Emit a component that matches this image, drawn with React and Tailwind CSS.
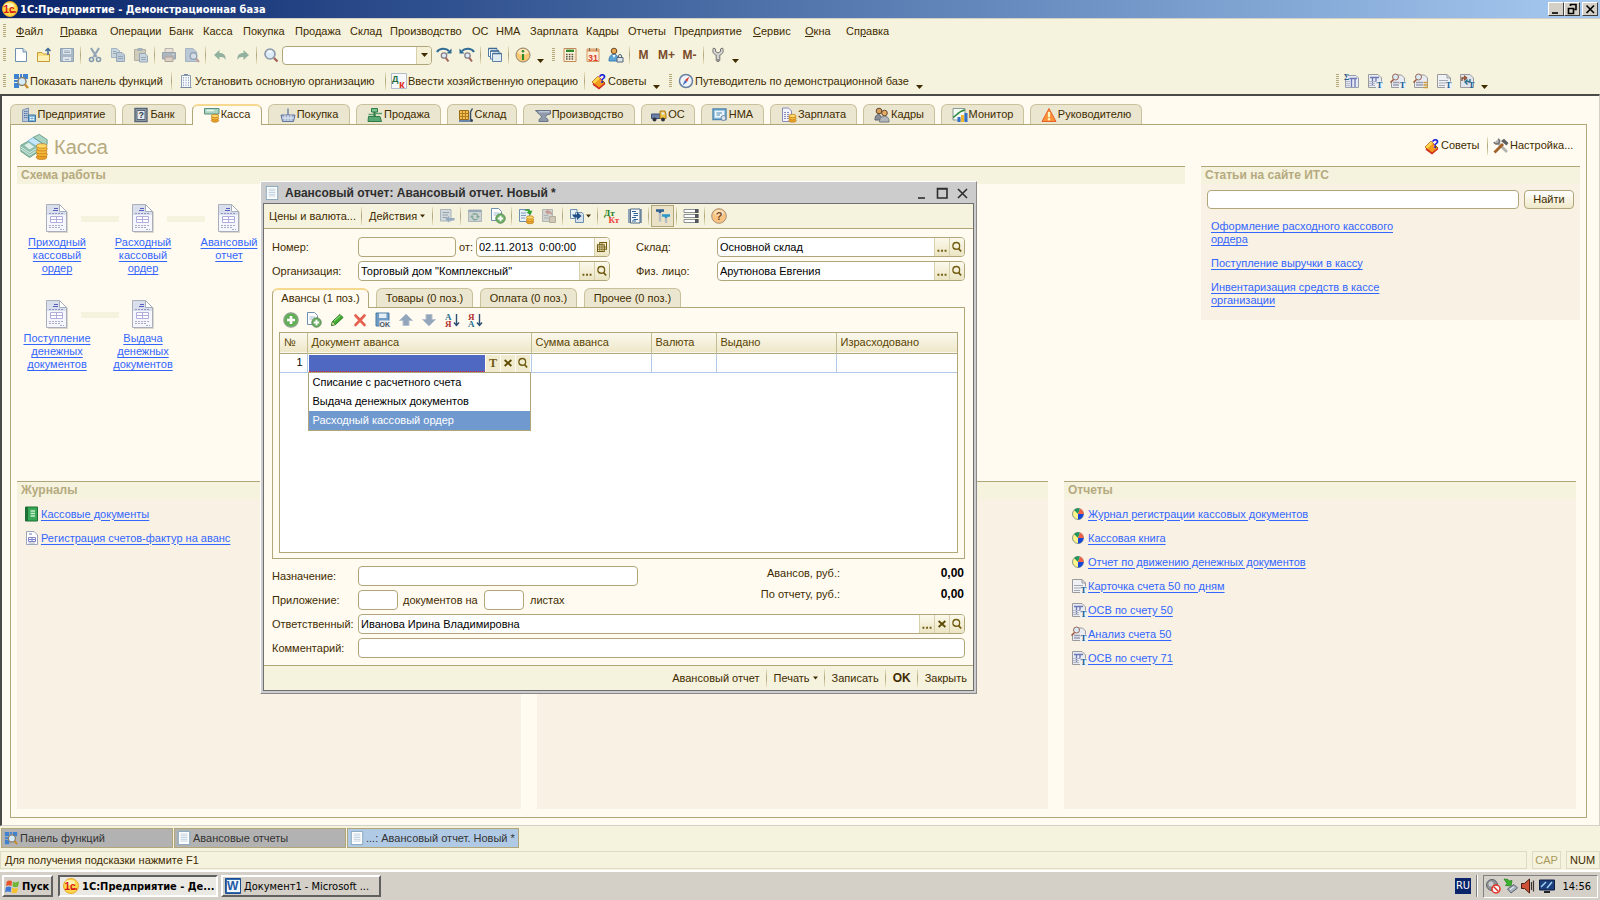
import React from "react";

// Letter inside an icon
const Glyph = ({ x, y, size, color, serif, children }) => (
    <text
        x={x}
        y={y}
        fontSize={size}
        fontWeight="bold"
        fill={color}
        fontFamily={serif ? "Liberation Serif, serif" : "Liberation Sans, sans-serif"}
    >
        {children}
    </text>
);

const Coins = ({ x, top }) => (
    <>
        <ellipse cx={x} cy={top + 4.5} rx="3.7" ry="1.7" fill="#f0a92c" stroke="#b97413" strokeWidth="0.7" />
        <ellipse cx={x} cy={top + 2.3} rx="3.7" ry="1.7" fill="#f7bd3e" stroke="#b97413" strokeWidth="0.7" />
        <ellipse cx={x} cy={top} rx="3.7" ry="1.7" fill="#ffd968" stroke="#b97413" strokeWidth="0.7" />
    </>
);

// 16x16 drawings used by the toolbars, tabs and lists
const ICONS = {
    logo: (
        <>
            <circle cx="8" cy="8" r="7.5" fill="#ffd84a" stroke="#e8a92a" />
            <ellipse cx="7" cy="4.5" rx="5" ry="2.6" fill="#fff3b0" />
            <Glyph x="1.5" y="11.5" size="10" color="#d8161b">1c</Glyph>
            <path d="M8 11 H14" stroke="#d8161b" strokeWidth="1.4" />
        </>
    ),
    page: (
        <>
            <path d="M2.5 1.5 H10 L13.5 5 V14.5 H2.5 Z" fill="#fff" stroke="#6f8fae" />
            <path d="M10 1.5 V5 H13.5" fill="#d5e2f0" stroke="#6f8fae" />
        </>
    ),
    open: (
        <>
            <path d="M1.5 5.5 H6 L7.5 7 H13.5 V14.5 H1.5 Z" fill="#ffe083" stroke="#c79a3a" />
            <path d="M2 9 H13 V14 H2 Z" fill="#fff0b5" />
            <path d="M12 8 V2 M9.5 4 L12 1.5 L14.5 4" fill="none" stroke="#3e6a94" strokeWidth="1.5" />
        </>
    ),
    save: (
        <>
            <path d="M1.5 1.5 H14.5 V14.5 H1.5 Z" fill="#a9b9c8" stroke="#8fa2b4" />
            <path d="M4 2 H12 V7 H4 Z M4 10 H12 V14 H4 Z" fill="#dfe5ea" />
            <path d="M5 4 H11 M5 5.5 H11 M6 12.5 H10" stroke="#9db0c2" />
        </>
    ),
    cut: (
        <>
            <path d="M4 1 L9.5 10 M12 1 L6.5 10" stroke="#93a5b6" strokeWidth="2.2" fill="none" />
            <circle cx="4.5" cy="12.5" r="2" fill="none" stroke="#8298ad" strokeWidth="1.6" />
            <circle cx="11.5" cy="12.5" r="2" fill="none" stroke="#8298ad" strokeWidth="1.6" />
        </>
    ),
    copy: (
        <>
            <path d="M1.5 1.5 H7 L9.5 4 V10.5 H1.5 Z" fill="#c9d4dd" stroke="#a3b4c4" />
            <path d="M6.5 5.5 H12 L14.5 8 V14.5 H6.5 Z" fill="#bccad7" stroke="#94a7b9" />
            <path d="M8 9.5 H13 M8 11.5 H13 M3 4.5 H6 M3 6.5 H6" stroke="#94a7b9" />
        </>
    ),
    paste: (
        <>
            <path d="M1.5 2.5 H12.5 V13.5 H1.5 Z" fill="#cfccbb" stroke="#b0afa0" />
            <path d="M4.5 1 H9.5 V4 H4.5 Z" fill="#a5b1bb" />
            <path d="M6.5 6.5 H12 L14.5 9 V15 H6.5 Z" fill="#c9d4dd" stroke="#94a7b9" />
            <path d="M8 10.5 H13 M8 12.5 H13" stroke="#94a7b9" />
        </>
    ),
    print: (
        <>
            <path d="M4 1.5 H12 V6 H4 Z" fill="#e8e0d6" stroke="#b8b4ae" />
            <path d="M1.5 5.5 H14.5 V12 H1.5 Z" fill="#adb5bd" stroke="#98a3ae" />
            <path d="M4 10 H12 V14.5 H4 Z" fill="#dccfc5" stroke="#aea39b" />
            <path d="M11.5 7.5 H13" stroke="#dfe8d0" />
        </>
    ),
    preview: (
        <>
            <path d="M1.5 1.5 H9 L12.5 5 V14.5 H1.5 Z" fill="#bac8d5" stroke="#a5b4c2" />
            <circle cx="9.5" cy="9" r="3.3" fill="#d5dee6" stroke="#93a5b6" strokeWidth="1.4" />
            <path d="M12 11.5 L15 15" stroke="#bb9f9a" strokeWidth="2" />
        </>
    ),
    undo: <path d="M2 8 L7.5 3 V6 C12 6 14 8.5 13.5 13 C12 10 10.5 9.8 7.5 10 V13 Z" fill="#93b19f" />,
    redo: <path d="M14 8 L8.5 3 V6 C4 6 2 8.5 2.5 13 C4 10 5.5 9.8 8.5 10 V13 Z" fill="#93b19f" />,
    find: (
        <>
            <circle cx="7" cy="7" r="5" fill="#dcebf8" stroke="#8b98a8" strokeWidth="1.6" />
            <path d="M5 5.5 Q6.5 4 8.5 5" stroke="#fff" strokeWidth="1.4" fill="none" />
            <path d="M11 11 L14.5 14.5" stroke="#a2655a" strokeWidth="2.4" />
        </>
    ),
    findNext: (
        <>
            <path d="M1 5 C3 1 10 0.5 13 4" stroke="#2f6b94" strokeWidth="2" fill="none" />
            <path d="M15.5 1.5 V6.5 H10.5 Z" fill="#2f6b94" />
            <circle cx="8" cy="8.5" r="2.7" fill="#dcebf8" stroke="#8b8088" strokeWidth="1.3" />
            <path d="M9.8 10.8 L12.5 14.5" stroke="#a2655a" strokeWidth="2" />
        </>
    ),
    findPrev: (
        <>
            <path d="M15 5 C13 1 6 0.5 3 4" stroke="#2f6b94" strokeWidth="2" fill="none" />
            <path d="M0.5 1.5 V6.5 H5.5 Z" fill="#2f6b94" />
            <circle cx="8.5" cy="8.5" r="2.7" fill="#dcebf8" stroke="#8b8088" strokeWidth="1.3" />
            <path d="M10.3 10.8 L13 14.5" stroke="#a2655a" strokeWidth="2" />
        </>
    ),
    windows: (
        <>
            <path d="M1.5 1.5 H10 V9.5 H1.5 Z" fill="#fff" stroke="#4f7ba3" />
            <path d="M3.5 4 H12 V12 H3.5 Z" fill="#fff" stroke="#4f7ba3" />
            <path d="M5.5 6.5 H14.5 V14.5 H5.5 Z" fill="#e1ebf4" stroke="#5f82a4" />
            <path d="M1.5 1.5 H10 M3.5 4 H12 M5.5 6.5 H14.5" stroke="#3e6a94" strokeWidth="1.6" />
        </>
    ),
    info: (
        <>
            <circle cx="8" cy="8" r="7" fill="#fbc872" stroke="#8a8378" />
            <ellipse cx="8" cy="5" rx="5" ry="3" fill="#fde7bd" />
            <path d="M8 7 V13" stroke="#2f8a2b" strokeWidth="2.2" />
            <circle cx="8" cy="4.2" r="1.3" fill="#2f8a2b" />
        </>
    ),
    calc: (
        <>
            <path d="M2 1.5 H14 V14.5 H2 Z" fill="#fdf4dc" stroke="#c58a5a" />
            <path d="M4 3.8 H12" stroke="#2f8a2b" strokeWidth="2.4" />
            <path d="M4 7.5 H12.5 M4 9.8 H12.5 M4 12 H12.5" stroke="#5b5042" strokeWidth="1.5" strokeDasharray="1.6 1.2" />
        </>
    ),
    calendar: (
        <>
            <path d="M2 2 H14 V14.5 H2 Z" fill="#fdf0dc" stroke="#d29b62" />
            <path d="M2 3.5 H14" stroke="#e0a56f" strokeWidth="2.5" />
            <path d="M4.5 1 V4 M11.5 1 V4" stroke="#7b6a58" />
            <Glyph x="3" y="13.5" size="9" color="#e0402a">31</Glyph>
        </>
    ),
    user: (
        <>
            <circle cx="6" cy="4" r="2.8" fill="#e8a94f" stroke="#6b4a2c" />
            <path d="M1 14 C1 8 4 7.5 6 7.5 C9 7.5 10 9 10 14 Z" fill="#5ba3d6" stroke="#3d7fb0" />
            <path d="M4.5 8 L6 11 L7.5 8 Z" fill="#fff" />
            <path d="M9 10.5 H15 V15 H9 Z" fill="#dfe4e9" stroke="#54687c" />
            <path d="M10.5 10.5 V9 A1.5 1.5 0 0 1 13.5 9 V10.5" fill="none" stroke="#54687c" />
        </>
    ),
    wrench: (
        <>
            <path d="M3.5 1 C1.5 5 4 7.5 6.2 8 V13.5 Q8 16 9.8 13.5 V8 C12 7.5 14.5 5 12.5 1 L10.5 2 V4.5 L8 6 L5.5 4.5 V2 Z" fill="#d4d4d2" stroke="#75736f" />
            <circle cx="8" cy="13" r="0.9" fill="#75736f" />
        </>
    ),
    panel: (
        <>
            <path d="M1 1 H6 V6 H1 Z M10 1 H15 V6 H10 Z M1 10 H6 V15 H1 Z M1 7 H5 V9 H1 Z M7 1 H9 V4 H7 Z" fill="#3f82cf" />
            <circle cx="9" cy="8.5" r="4" fill="#d4ecfa" stroke="#8b7f6c" strokeWidth="1.5" />
            <path d="M12 11.5 L15 15" stroke="#c98a2c" strokeWidth="2.4" />
        </>
    ),
    org: (
        <>
            <path d="M3.5 2.5 H12.5 V14.5 H3.5 Z" fill="#f6f9fc" stroke="#8c9cb2" />
            <path d="M2.5 14.5 H13.5 M6 1.5 H10" stroke="#7788a0" />
            <path d="M5.5 4 V13 M8 4 V13 M10.5 4 V13" stroke="#9fadc4" strokeDasharray="1.5 1" />
        </>
    ),
    dk: (
        <>
            <path d="M0.5 0.5 H15.5 V15.5 H0.5 Z" fill="#f6f8fa" stroke="#b3bcc8" />
            <Glyph x="1" y="9" size="9" color="#1f6d3c">Д</Glyph>
            <Glyph x="8" y="14.5" size="11" color="#df2f22">к</Glyph>
        </>
    ),
    tips: (
        <>
            <path d="M1 9 L7 3.5 L14 10 L8 15.5 Z" fill="#f29a1b" stroke="#9a3e10" />
            <path d="M1 9 L7 3.5 L9 5.5 L3.5 10.5 Z" fill="#ffd54a" />
            <path d="M2 11 L8 15.5 L14 10.5" stroke="#d5311c" strokeWidth="1.6" fill="none" />
            <Glyph x="7.5" y="10" size="12" color="#1418d8">?</Glyph>
        </>
    ),
    compass: (
        <>
            <circle cx="8" cy="8" r="6.5" fill="#eef4fa" stroke="#6880a0" strokeWidth="1.5" />
            <path d="M11.5 3.5 L9 9 L7 7 Z" fill="#dd3a2c" />
            <path d="M4.5 12.5 L7 7 L9 9 Z" fill="#3a6fc4" />
        </>
    ),
    building: (
        <>
            <path d="M1.5 3 L7.5 1 V14.5 H1.5 Z" fill="#b8c6da" stroke="#7f93b3" />
            <path d="M3 4.5 H6.5 M3 6.5 H6.5 M3 8.5 H6.5 M3 10.5 H6.5" stroke="#54719c" strokeDasharray="1.5 0.7" />
            <path d="M7.5 8 H14.5 V14.5 H7.5 Z" fill="#7fb7dc" stroke="#3c74a4" />
            <path d="M9 10.5 H13.5 M9 12.5 H13.5" stroke="#fff" strokeDasharray="1.5 1" />
        </>
    ),
    safe: (
        <>
            <path d="M2 1.5 H14 V14.5 H2 Z" fill="#9aa7b5" stroke="#566475" strokeWidth="1.4" />
            <path d="M4 3.5 H12 V12.5 H4 Z" fill="#e7ebef" stroke="#566475" />
            <Glyph x="5.5" y="11.2" size="9" color="#2f3d4d">?</Glyph>
        </>
    ),
    cash: (
        <>
            <path d="M0.5 1.5 H15 V7 H0.5 Z" fill="#a9d5c4" stroke="#5a8d7c" />
            <path d="M2.5 3.5 H10" stroke="#e4f5ee" strokeWidth="1.5" />
            <Coins x={11} top={9} />
        </>
    ),
    basket: (
        <>
            <path d="M1 8 H15 L13.5 14.5 H2.5 Z" fill="#a3b3cd" stroke="#6078a0" />
            <path d="M5 8 V14 M8 8 V14 M11 8 V14 M2 11 H14" stroke="#e6ecf5" />
            <path d="M8 8 V1.5" stroke="#6078a0" strokeWidth="1.3" />
        </>
    ),
    register: (
        <>
            <path d="M4.5 1.5 H10.5 V5 H4.5 Z" fill="#7cc491" stroke="#2e7c46" />
            <path d="M7.5 5 V9" stroke="#2e7c46" strokeWidth="2.4" />
            <path d="M1.5 7.5 H6 M9 6.5 H15" stroke="#5a9f70" strokeWidth="1.6" />
            <path d="M1.5 9.5 H13 L14.5 14.5 H1 Z" fill="#58a873" stroke="#2e7c46" />
        </>
    ),
    warehouse: (
        <>
            <path d="M1.5 3.5 H10.5 V12.5 H1.5 Z" fill="#f5c04e" stroke="#9a6a18" />
            <path d="M4.5 3.5 V12.5 M7.5 3.5 V12.5 M1.5 6.5 H10.5 M1.5 9.5 H10.5" stroke="#b07d22" />
            <path d="M12.5 13 V5 L14.5 1.5" stroke="#3d4f66" strokeWidth="1.5" fill="none" />
            <path d="M1 14 H12" stroke="#4a6da0" strokeWidth="1.6" />
            <circle cx="13.5" cy="13.5" r="1.5" fill="#33415a" />
        </>
    ),
    anvil: (
        <>
            <path d="M0.5 3.5 H15.5 V7 C12 7.5 10.5 8.5 10.5 10.5 L13 12.5 V14.5 H4 V12.5 L6.5 10.5 C6.5 8 3.5 7.5 0.5 3.5 Z" fill="#8f9aab" stroke="#67748a" />
            <path d="M4 4.8 H14.5" stroke="#d3dae4" />
        </>
    ),
    truck: (
        <>
            <path d="M0.5 7 H9 V11.5 H0.5 Z" fill="#6a7fa5" stroke="#40527a" />
            <path d="M9 4 H14 L15 8 V11.5 H9 Z" fill="#f2c443" stroke="#a87a1c" />
            <path d="M10.5 5.5 H13 L13.7 7.5 H10.5 Z" fill="#dcecf7" />
            <circle cx="3.5" cy="12.5" r="2" fill="#30343c" />
            <circle cx="12" cy="12.5" r="2" fill="#30343c" />
        </>
    ),
    patent: (
        <>
            <path d="M1 2 H14 V12.5 H1 Z" fill="#9cc8e6" stroke="#4f86ae" strokeWidth="1.4" />
            <path d="M3 4 H12 V10.5 H3 Z" fill="#edf6fc" />
            <path d="M4.5 6 H10 M4.5 8 H8" stroke="#4f86ae" />
            <circle cx="11.5" cy="11" r="2.5" fill="#d9e3ee" stroke="#6d86a4" />
        </>
    ),
    payroll: (
        <>
            <path d="M1.5 1 H7.5 L10.5 4 V14.5 H1.5 Z" fill="#f3f3fb" stroke="#8c8cb8" />
            <path d="M3 5.5 H9 M3 7.5 H9 M3 9.5 H9 M3 11.5 H9" stroke="#8c8cb8" strokeDasharray="2 1" />
            <Coins x={11.5} top={9} />
        </>
    ),
    staff: (
        <>
            <circle cx="5" cy="4" r="2.8" fill="#d9a05a" stroke="#5d4630" />
            <path d="M1 13 C1 8 3 7.5 5.5 7.5 L9 13 Z" fill="#8b8f97" stroke="#5f636b" />
            <circle cx="10.5" cy="6" r="2.8" fill="#e8ac61" stroke="#5d4630" />
            <path d="M5.5 15 C5.5 10 8 9.5 10.5 9.5 C14 9.5 15 11 15 15 Z" fill="#b3b7bd" stroke="#74787f" />
        </>
    ),
    monitor: (
        <>
            <path d="M1 1.5 H13 V13 H1 Z" fill="#f4faf4" stroke="#8b9a94" />
            <path d="M1 10.5 C4 9.5 6 4 13 3" stroke="#2f8a3b" strokeWidth="1.6" fill="none" />
            <path d="M5.5 10 H8.5 V15 H5.5 Z M12.5 6 H15.5 V15 H12.5 Z" fill="#3470c9" />
            <path d="M9 8 H12 V15 H9 Z" fill="#f4b62d" />
        </>
    ),
    warning: (
        <>
            <path d="M8 1.5 L15 14.5 H1 Z" fill="#fb9238" stroke="#e8602a" strokeLinejoin="round" />
            <path d="M8 5 V10.3" stroke="#fff6c0" strokeWidth="2.2" />
            <circle cx="8" cy="12.3" r="1.2" fill="#fff6c0" />
        </>
    ),
    money: (
        <>
            <path d="M0.5 7 L5 4.5 L10 8 V11 L5.5 14 L0.5 10.5 Z" fill="#8fbfac" stroke="#5f9a84" strokeWidth="0.5" />
            <path d="M0.5 8 L5.5 11.3 L10 8.5 M0.5 9.2 L5.5 12.6 L10 9.8" stroke="#e4f3ec" strokeWidth="0.5" fill="none" />
            <path d="M4.5 4.5 L7.5 2.5 L13 6 V8.5 L10 10.5 V8 Z" fill="#c4e7fb" stroke="#7ab3d6" strokeWidth="0.5" />
            <path d="M7.5 2.5 L11 0.8 L15.5 3.8 V6.5 L13 8 V6 Z" fill="#a9d2c2" stroke="#5f9a84" strokeWidth="0.5" />
            <path d="M2.5 7 L5 5.6 L8 7.8 L5.5 9.4 Z" fill="#dff2ea" />
            <ellipse cx="12.3" cy="13.8" rx="3" ry="1.3" fill="#eea127" stroke="#b97413" strokeWidth="0.4" />
            <ellipse cx="12.6" cy="12.2" rx="3" ry="1.3" fill="#f5b434" stroke="#b97413" strokeWidth="0.4" />
            <ellipse cx="12.3" cy="10.6" rx="3" ry="1.3" fill="#f7bd3e" stroke="#b97413" strokeWidth="0.4" />
            <ellipse cx="12.6" cy="9" rx="3" ry="1.3" fill="#f7bd3e" stroke="#b97413" strokeWidth="0.4" />
            <ellipse cx="12.4" cy="7.4" rx="3" ry="1.3" fill="#ffd968" stroke="#b97413" strokeWidth="0.4" />
        </>
    ),
    tools: (
        <>
            <path d="M3 3 L14 14" stroke="#b2b2ae" strokeWidth="2.8" />
            <path d="M1 4 A3 3 0 0 0 6 5 A3 3 0 0 0 5 1" fill="none" stroke="#777" strokeWidth="1.8" />
            <path d="M1.5 14.5 L10 6" stroke="#a1622a" strokeWidth="2.8" />
            <path d="M8 3 L11 0.8 L15.5 5 L13.5 7.5 L11 5.5 Z" fill="#5d5f63" />
        </>
    ),
    doc: (
        <>
            <path d="M1.5 0.5 H14.5 V15.5 H1.5 Z" fill="#fff" stroke="#7aa0b8" />
            <path d="M4 3.5 H12 M4 5.5 H12 M4 7.5 H12 M4 9.5 H12 M4 11.5 H12" stroke="#b7cbdc" />
        </>
    ),
    write: (
        <>
            <path d="M1.5 1.5 H12 V13 H1.5 Z" fill="#d3d8db" stroke="#a8b3bc" />
            <path d="M3.5 4.5 H10 M3.5 7 H9 M3.5 9.5 H8" stroke="#97a5b1" />
            <path d="M6.5 11 L10 8 V10 H15.5 V12.5 H10 V14.5 Z" fill="#94a9bd" />
        </>
    ),
    refresh: (
        <>
            <path d="M1.5 2 H14.5 V13.5 H1.5 Z" fill="#ccd2d1" stroke="#adb6ba" />
            <path d="M1.5 3 H14.5" stroke="#97a7b3" strokeWidth="2" />
            <path d="M5.5 6.5 C8 5 10.5 6 10.8 8 M10.5 11 C8 12.5 5.5 11.5 5.2 9.5" fill="none" stroke="#7da894" strokeWidth="1.3" />
            <path d="M9 8 H13 L11 10.5 Z M3 9.5 H7 L5 7 Z" fill="#7da894" />
        </>
    ),
    pageAdd: (
        <>
            <path d="M1.5 0.5 H8.5 L11.5 3.5 V12.5 H1.5 Z" fill="#fff" stroke="#6f8fae" />
            <path d="M3.5 5 H9 M3.5 7 H8" stroke="#a9bed2" />
            <circle cx="10.5" cy="10.5" r="4.7" fill="#6bb161" stroke="#5c8a58" />
            <path d="M10.5 7.8 V13.2 M7.8 10.5 H13.2" stroke="#fff" strokeWidth="1.8" />
        </>
    ),
    post: (
        <>
            <path d="M1.5 1.5 H11.5 V13.5 H1.5 Z" fill="#e8f0f7" stroke="#6f8fae" />
            <path d="M3 5 H8 M3 7.5 H8 M3 10 H7" stroke="#7f9cba" />
            <path d="M6 3 C8 0.5 11 0.5 12.5 3 L14.5 2.5 L12.5 7 L8.5 4.5 L10.5 3.8 C9.5 2.5 7.5 2.5 6 3 Z" fill="#34a02c" />
            <Coins x={12} top={9.5} />
        </>
    ),
    unpost: (
        <>
            <path d="M1.5 1.5 H11.5 V13.5 H1.5 Z" fill="#d2d4d0" stroke="#b2b6b3" />
            <path d="M3 10 H8 M3 7.5 H7" stroke="#aab0b3" />
            <path d="M4 4 L7.5 1 V3 C10 3 11.5 4.5 11 7.5 C10 5.5 9 5.2 7.5 5.2 V7 Z" fill="#c59a93" />
            <path d="M8.5 8.5 H14.5 V14.5 H8.5 Z" fill="#cfc7b6" stroke="#b3ac9c" />
        </>
    ),
    goto: (
        <>
            <path d="M1.5 1.5 H8 V10.5 H1.5 Z" fill="#e8f0f7" stroke="#6f8fae" />
            <path d="M6.5 4.5 H13 L14.5 6.5 V14.5 H6.5 Z" fill="#d4e2ee" stroke="#6f8fae" />
            <path d="M3 6.5 H8 V4 L12.5 8 L8 12 V9.5 H5 Z" fill="#1f4f86" />
        </>
    ),
    dtkt: (
        <>
            <Glyph x="0" y="7.5" size="9" color="#1e8022" serif>Дт</Glyph>
            <Glyph x="4.5" y="15" size="9" color="#ef3b3b" serif>Кт</Glyph>
        </>
    ),
    journal: (
        <>
            <path d="M1 1 H15 V15 H1 Z" fill="#8fa1b4" />
            <path d="M3.5 1 H13 V15 H3.5 Z" fill="#f4f8fb" stroke="#4d6882" />
            <path d="M5 3.5 H9 M6.5 5.5 H11 M6.5 7.5 H11 M5 9.5 H9 M6.5 11.5 H11 M5 13 H9" stroke="#2f6496" />
        </>
    ),
    filter: (
        <>
            <path d="M5 3.5 V13.5 M11 8 V15" stroke="#b9bdc0" strokeWidth="2.4" />
            <path d="M1 2.5 H9 M5 2.5 V5" stroke="#2f5e92" strokeWidth="2.4" />
            <path d="M7 7.5 H15 M11 7.5 V10" stroke="#2b97c9" strokeWidth="2.4" />
        </>
    ),
    rows: (
        <>
            <path d="M1 1.5 H15 V4.5 H1 Z M1 6.5 H15 V9.5 H1 Z M1 11.5 H15 V14.5 H1 Z" fill="#fff" stroke="#8c9195" />
            <path d="M12 1 H15.5 V5 H12 Z M12 6 H15.5 V10 H12 Z M12 11 H15.5 V15 H12 Z" fill="#54585d" />
        </>
    ),
    help: (
        <>
            <circle cx="8" cy="8" r="7.3" fill="#f9c384" stroke="#a99074" />
            <ellipse cx="8" cy="5" rx="5" ry="3" fill="#fde0b8" />
            <Glyph x="4.8" y="12" size="11" color="#7a4a24">?</Glyph>
        </>
    ),
    add: (
        <>
            <circle cx="8" cy="8" r="7.2" fill="#62ad57" stroke="#8fa58b" strokeWidth="1.2" />
            <path d="M8 4 V12 M4 8 H12" stroke="#fff" strokeWidth="2.6" />
        </>
    ),
    pencil: (
        <>
            <path d="M2.5 13.5 L3.5 9.5 L11 2.5 L14 5.5 L6.5 12.5 Z" fill="#3fae2f" stroke="#227318" />
            <path d="M2.5 13.5 L3.5 9.5 L6.5 12.5 Z" fill="#f0e3c0" stroke="#227318" strokeWidth="0.6" />
            <path d="M5 9 L11.5 3.5" stroke="#a9e59d" />
        </>
    ),
    remove: <path d="M3.5 3.5 L12.5 13 M12.5 3.5 L3.5 13" stroke="#e5604f" strokeWidth="2.6" strokeLinecap="round" />,
    saveOk: (
        <>
            <path d="M1 1 H14 V14 H1 Z" fill="#6e9cc4" stroke="#4d7aa3" />
            <path d="M4 1.5 H11.5 V6 H4 Z" fill="#e5eef5" />
            <path d="M4.5 8.5 H15.5 V15.5 H4.5 Z" fill="#f0f3f5" />
            <Glyph x="4.5" y="14.5" size="7" color="#4a5560">OK</Glyph>
        </>
    ),
    up: <path d="M8 2 L14.5 8.5 H11 V13.5 H5 V8.5 H1.5 Z" fill="#93a5ba" stroke="#b5c1ce" />,
    down: <path d="M8 14 L14.5 7.5 H11 V2.5 H5 V7.5 H1.5 Z" fill="#93a5ba" stroke="#b5c1ce" />,
    sortAsc: (
        <>
            <Glyph x="1" y="7.5" size="9" color="#2b7090" serif>А</Glyph>
            <Glyph x="1" y="15" size="9" color="#b03030" serif>Я</Glyph>
            <path d="M12.5 2 V13 M10 10.5 L12.5 13.5 L15 10.5" stroke="#2d4f74" strokeWidth="1.4" fill="none" />
        </>
    ),
    sortDesc: (
        <>
            <Glyph x="1" y="7.5" size="9" color="#b03030" serif>Я</Glyph>
            <Glyph x="1" y="15" size="9" color="#2b7090" serif>А</Glyph>
            <path d="M12.5 2 V13 M10 10.5 L12.5 13.5 L15 10.5" stroke="#2d4f74" strokeWidth="1.4" fill="none" />
        </>
    ),
    // sheets used by the standard reports
    sumReport: (
        <>
            <path d="M3.5 2.5 H12 L14.5 5 V14.5 H1.5 V7" fill="#e6e9f2" stroke="#9a9fb0" />
            <path d="M5.5 5.5 H13 M7.5 5.5 V14 M11 5.5 V14" stroke="#6b78b5" strokeWidth="1.3" />
            <path d="M2 8.5 H6 M2 10.5 H6 M2 12.5 H6" stroke="#b5bac8" />
            <Glyph x="0" y="7" size="8" color="#2c5b86" serif>Σ</Glyph>
        </>
    ),
    osv: (
        <>
            <path d="M1.5 1.5 H11 L14.5 5 V14.5 H1.5 Z" fill="#e9ebf2" stroke="#9a9a9c" />
            <path d="M3 4.5 H12 M5.5 4.5 V13 M9 4.5 V9" stroke="#6b78b5" strokeWidth="1.3" />
            <path d="M2 8.5 H8 M2 10.5 H8 M2 12.5 H8" stroke="#b5bac8" />
            <path d="M9 8.5 H16 V16 H9 Z" fill="#eef2f5" />
            <Glyph x="9.5" y="15" size="9" color="#1f5f95" serif>T</Glyph>
        </>
    ),
    analysis: (
        <>
            <path d="M5.5 2 H11.5 L14.5 5 V14.5 H1.5 V9" fill="#e9ebf2" stroke="#9a9a9c" />
            <path d="M3 9.5 H9 M3 12 H9" stroke="#9a9fb0" strokeWidth="1.3" />
            <circle cx="5.5" cy="4" r="3" fill="#dbe9f5" stroke="#9a6656" />
            <path d="M3.5 6.5 L0.5 9.5" stroke="#9a4f32" strokeWidth="1.5" />
            <path d="M9 8.5 H16 V16 H9 Z" fill="#eef2f5" />
            <Glyph x="9.5" y="15" size="9" color="#1f5f95" serif>T</Glyph>
        </>
    ),
    analysisRows: (
        <>
            <path d="M5.5 2 H11.5 L14.5 5 V14.5 H1.5 V9" fill="#e9ebf2" stroke="#9a9a9c" />
            <path d="M3 9.5 H10 M3 12 H10" stroke="#9a9fb0" strokeWidth="1.3" />
            <circle cx="5.5" cy="4" r="3" fill="#dbe9f5" stroke="#9a6656" />
            <path d="M3.5 6.5 L0.5 9.5" stroke="#9a4f32" strokeWidth="1.5" />
            <path d="M10.5 9.5 H15 M10.5 12 H15 M10.5 14.5 H15" stroke="#c99b3b" strokeWidth="1.4" />
        </>
    ),
    card: (
        <>
            <path d="M1.5 1.5 H11 L14.5 5 V14.5 H1.5 Z" fill="#eff1f5" stroke="#9a9a9c" />
            <path d="M11 1.5 V5 H14.5" fill="none" stroke="#9a9a9c" />
            <path d="M3 7.5 H12 M3 10 H9 M3 12.5 H9" stroke="#a4a8b2" />
            <path d="M9 8.5 H16 V16 H9 Z" fill="#eef2f5" />
            <Glyph x="9.5" y="15" size="9" color="#1f5f95" serif>T</Glyph>
        </>
    ),
    turnover: (
        <>
            <path d="M1.5 1.5 H11 L14.5 5 V14.5 H1.5 Z" fill="#e2e5ee" stroke="#9a9a9c" />
            <path d="M3 8 V5 H6 M5 2.8 L7.5 5 L5 7.2" stroke="#8a4a2a" strokeWidth="1.4" fill="none" />
            <path d="M11 6 V8.5 H7 M8.5 6.5 L6 9 L8.5 11.5" stroke="#2b7090" strokeWidth="1.4" fill="none" />
            <Glyph x="9.5" y="15" size="9" color="#1f5f95" serif>T</Glyph>
        </>
    ),
    pie: (
        <>
            <circle cx="7" cy="8" r="5.5" fill="#fdf58a" stroke="#8f9a86" />
            <path d="M7 8 L3 4 A5.5 5.5 0 0 1 9 2.7 Z" fill="#1f9660" />
            <path d="M7 8 L9 2.7 A5.5 5.5 0 0 1 12.500 8 Z" fill="#f2604a" />
            <path d="M7 8 H12.500 A5.5 5.5 0 0 1 7 13.5 Z" fill="#1746d8" />
        </>
    ),
    book: (
        <>
            <path d="M1.5 1 H13.5 V15 H1.5 Z" fill="#38a857" stroke="#1d6e35" />
            <path d="M1.5 1 H4 V15 H1.5 Z" fill="#1d6e35" />
            <path d="M6.5 5 H11 M6.5 7.5 H11 M6.5 10 H11" stroke="#c5edd0" strokeWidth="1.3" />
        </>
    ),
    invoice: (
        <>
            <path d="M2.5 1.5 H10 L13.5 5 V14.5 H2.5 Z" fill="#fff" stroke="#9aa5bb" />
            <path d="M5 4 H8" stroke="#6d78c0" />
            <path d="M4.5 7.5 H11.5 V11.5 H4.5 Z M8 7.5 V11.5 M4.5 9.5 H11.5" stroke="#8084cc" fill="none" />
            <path d="M4.5 13 H11" stroke="#a9adc4" />
        </>
    ),
    flag: (
        <>
            <path d="M2 2.5 Q5 0.8 7.5 2.5 L7 7.5 Q4 6 1 7.5 Z" fill="#e8532c" />
            <path d="M8.5 3 Q11.5 4.5 15 2.5 L14 8 Q11 9.5 8 8 Z" fill="#6fb536" />
            <path d="M1 8.8 Q4 7.2 6.8 8.8 L6 14 Q3 12.5 0 14 Z" fill="#3f78d8" />
            <path d="M7.8 9.2 Q10.5 10.8 13.8 9.2 L12.8 14.5 Q10 16 7 14.5 Z" fill="#f7c22c" />
        </>
    ),
    word: (
        <>
            <path d="M0.5 0.5 H15.5 V15.5 H0.5 Z" fill="#2f6cb5" stroke="#1d4d8c" />
            <path d="M2 2 H15 V14 H2 Z" fill="#f2f7fc" />
            <Glyph x="2" y="12" size="12" color="#1f5ba8">W</Glyph>
        </>
    ),
    muted: (
        <>
            <circle cx="7" cy="7" r="5.5" fill="#8e9396" stroke="#5f6466" />
            <circle cx="6" cy="6" r="2.5" fill="#c9cdcf" />
            <circle cx="11" cy="11" r="4" fill="#fff" stroke="#dd2f22" strokeWidth="1.5" />
            <path d="M8.5 8.5 L13.5 13.5" stroke="#dd2f22" strokeWidth="1.5" />
        </>
    ),
    usb: (
        <>
            <path d="M1 1 L5 1.5 L6.5 3 L9 2.5 L8 8 L2.5 7.5 L4 5.5 Z" fill="#3cb52f" stroke="#1f7a18" strokeWidth="0.7" />
            <path d="M4.5 11 L11 6.5 L14.5 10 L8 15 Z" fill="#a9b2c0" stroke="#59616e" />
            <path d="M7 11.5 L11 8.8" stroke="#f2f4f7" />
        </>
    ),
    speaker: (
        <>
            <path d="M0.5 5.5 H3.5 L8.5 1 V15 L3.5 10.5 H0.5 Z" fill="#cf5136" stroke="#4d1c10" />
            <path d="M10.5 4 V12 M12.5 2.5 V13.5" stroke="#3a3432" strokeWidth="1.2" />
        </>
    ),
    display: (
        <>
            <path d="M0.5 2 H15.5 V12 H0.5 Z" fill="#1d3e7c" stroke="#0e1f40" />
            <path d="M2 9 L7 4 M8 10 L13 4" stroke="#9fd1f5" strokeWidth="1.5" />
            <path d="M5 14 H11" stroke="#20242c" strokeWidth="2" />
        </>
    ),
    lens: (
        <>
            <circle cx="7" cy="6.5" r="4.5" fill="none" stroke="#6f5a10" strokeWidth="1.7" />
            <path d="M10 10 L13.5 14" stroke="#6f5a10" strokeWidth="2.4" />
        </>
    ),
    cross: <path d="M3.5 4 L12.5 12 M12.5 4 L3.5 12" stroke="#5c4a00" strokeWidth="2.4" />,
    letterT: <Glyph x="2.5" y="13.5" size="16" color="#6f5a10" serif>T</Glyph>,
    picker: (
        <>
            <path d="M5 2 H14 V11 H5 Z" fill="#f3ecc4" stroke="#6f5a10" strokeWidth="1.4" />
            <path d="M2 5 H11 V14 H2 Z" fill="#f3ecc4" stroke="#6f5a10" strokeWidth="1.4" />
            <path d="M2 8 H14 M2 11 H11 M5 5 V14 M8 2 V14" stroke="#6f5a10" />
        </>
    ),
    dots: <path d="M2 13 H4.5 M6.8 13 H9.3 M11.5 13 H14" stroke="#6f5a10" strokeWidth="2.4" />,
};

const Icon = ({ name, className = "w-4 h-4" }) => (
    <svg viewBox="0 0 16 16" className={`shrink-0 overflow-visible ${className}`} aria-hidden="true">
        {ICONS[name]}
    </svg>
);

const Grip = ({ className = "" }) => (
    <svg viewBox="0 0 3 14" className={`w-[3px] h-[14px] shrink-0 ${className}`} aria-hidden="true">
        <path d="M1.5 0 V14" stroke="#b5aa7e" strokeWidth="3" strokeDasharray="1 1" />
    </svg>
);

const Sep = ({ className = "mx-[2px]" }) => (
    <span className={`w-px h-[18px] shrink-0 bg-gradient-to-b from-[#e9e4c6] via-[#b0a679] to-[#e9e4c6] ${className}`} />
);

const Arrow = ({ className = "w-[7px]" }) => (
    <svg viewBox="0 0 7 4" className={`h-1 shrink-0 ${className}`} aria-hidden="true">
        <path d="M0 0 H7 L3.5 4 Z" fill="#3f2c00" />
    </svg>
);

// Strip of icon buttons; "|" draws a separator
const IconStrip = ({ items }) =>
    items.map(([name, title], i) =>
        name === "|" ? (
            <Sep key={i} />
        ) : (
            <button key={i} type="button" title={title} className="w-[23px] h-[22px] flex items-center justify-center shrink-0">
                <Icon name={name} />
            </button>
        )
    );

// label, width, index of the underlined letter
const MENU = [
    ["Файл", "w-[44px]", 0],
    ["Правка", "w-[50px]", 0],
    ["Операции", "w-[59px]"],
    ["Банк", "w-[34px]"],
    ["Касса", "w-[40px]"],
    ["Покупка", "w-[52px]"],
    ["Продажа", "w-[55px]"],
    ["Склад", "w-[40px]"],
    ["Производство", "w-[82px]"],
    ["ОС", "w-[24px]"],
    ["НМА", "w-[34px]"],
    ["Зарплата", "w-[56px]"],
    ["Кадры", "w-[42px]"],
    ["Отчеты", "w-[46px]"],
    ["Предприятие", "w-[79px]"],
    ["Сервис", "w-[52px]", 0],
    ["Окна", "w-[41px]", 0],
    ["Справка", "w-[50px]", 2],
];

const TABS = [
    ["Предприятие", "building", "w-[106px]"],
    ["Банк", "safe", "w-[64px]"],
    ["Касса", "cash", "w-[70px]"],
    ["Покупка", "basket", "w-[82px]"],
    ["Продажа", "register", "w-[85px]"],
    ["Склад", "warehouse", "w-[70px]"],
    ["Производство", "anvil", "w-[112px]"],
    ["ОС", "truck", "w-[54px]"],
    ["НМА", "patent", "w-[63px]"],
    ["Зарплата", "payroll", "w-[87px]"],
    ["Кадры", "staff", "w-[72px]"],
    ["Монитор", "monitor", "w-[83px]"],
    ["Руководителю", "warning", "w-[112px]"],
];

const REPORTS = [
    ["pie", "Журнал регистрации кассовых документов"],
    ["pie", "Кассовая книга"],
    ["pie", "Отчет по движению денежных документов"],
    ["card", "Карточка счета 50 по дням"],
    ["osv", "ОСВ по счету 50"],
    ["analysis", "Анализ счета 50"],
    ["osv", "ОСВ по счету 71"],
];

const TitleBar = () => (
    <header className="h-[19px] flex items-center px-[2px] bg-gradient-to-r from-[#0a246a] to-[#a6caf0] border-b border-[#d4d0c8]">
        <Icon name="logo" />
        <h1 className="ml-[2px] text-[11px] font-bold text-white font-['DejaVu_Sans_Condensed','DejaVu_Sans',sans-serif]">
            1С:Предприятие - Демонстрационная база
        </h1>
        <div className="ml-auto flex">
            {[
                ["Свернуть", "M3 10 H9"],
                ["Восстановить", "M5.5 3 V1.5 H11 V6.5 H9.5 M3.5 5.5 H8.5 V10.5 H3.5 Z"],
                ["Закрыть", "M3.5 2.5 L11 10 M11 2.5 L3.5 10"],
            ].map(([title, d]) => (
                <button
                    key={title}
                    type="button"
                    title={title}
                    className="w-4 h-[14px] bg-[#d4d0c8] border border-t-white border-l-white border-r-[#404040] border-b-[#404040] last:ml-[2px] flex items-center justify-center"
                >
                    <svg viewBox="0 0 14 12" className="w-[14px] h-3">
                        <path d={d} stroke="#000" strokeWidth="1.6" fill="none" />
                    </svg>
                </button>
            ))}
        </div>
    </header>
);

const MenuBar = () => (
    <nav className="h-6 flex items-center pl-[3px]">
        <Grip className="mr-[10px]" />
        {MENU.map(([label, width, hot]) => (
            <button key={label} type="button" className={`${width} shrink-0 text-left whitespace-nowrap`}>
                {hot === undefined ? (
                    label
                ) : (
                    <>
                        {label.slice(0, hot)}
                        <u>{label[hot]}</u>
                        {label.slice(hot + 1)}
                    </>
                )}
            </button>
        ))}
    </nav>
);

const MainToolbar = () => (
    <div className="h-6 flex items-center pl-[3px]">
        <Grip className="mr-[3px]" />
        <IconStrip
            items={[
                ["page", "Новый"], ["open", "Открыть"], ["save", "Сохранить"], ["|"],
                ["cut", "Вырезать"], ["copy", "Копировать"], ["paste", "Вставить"], ["|"],
                ["print", "Печать"], ["preview", "Просмотр"], ["|"],
                ["undo", "Отменить"], ["redo", "Вернуть"], ["|"],
                ["find", "Найти"],
            ]}
        />
        <div className="w-[150px] h-[19px] flex border border-[#b0a67a] rounded-sm bg-white overflow-hidden">
            <input aria-label="Поиск" className="flex-1 min-w-0 px-1 outline-none" />
            <button type="button" title="Список" className="w-[15px] flex items-center justify-center bg-[#f5f1d8] border-l border-[#d8d0aa]">
                <Arrow />
            </button>
        </div>
        <IconStrip
            items={[
                ["findNext", "Найти следующий"], ["findPrev", "Найти предыдущий"], ["|"],
                ["windows", "Окна"], ["|"], ["info", "Справка"],
            ]}
        />
        <Arrow className="w-[7px] ml-[3px] mt-3 mr-2" />
        <Grip className="mr-[3px]" />
        <IconStrip items={[["calc", "Калькулятор"], ["calendar", "Календарь"], ["user", "Пользователи"], ["|"]]} />
        {["M", "M+", "M-"].map((label) => (
            <button key={label} type="button" className="w-[23px] shrink-0 font-bold text-[12px] text-[#7a4a2a]">
                {label}
            </button>
        ))}
        <IconStrip items={[["|"], ["wrench", "Настройка"]]} />
        <Arrow className="w-[7px] ml-[3px] mt-3" />
    </div>
);

const TextButton = ({ icon, label, className }) => (
    <button type="button" className={`${className} h-[22px] flex items-center gap-px shrink-0 whitespace-nowrap`}>
        <Icon name={icon} />
        {label}
    </button>
);

const FunctionToolbar = () => (
    <div className="h-[27px] flex items-center pl-[3px] pt-px">
        <Grip className="mr-[7px]" />
        <TextButton icon="panel" label="Показать панель функций" className="w-[156px]" />
        <Sep className="ml-[2px] mr-[6px]" />
        <TextButton icon="org" label="Установить основную организацию" className="w-[205px]" />
        <Sep className="ml-[2px] mr-[5px]" />
        <TextButton icon="dk" label="Ввести хозяйственную операцию" className="w-[191px]" />
        <Sep className="ml-[2px] mr-[6px]" />
        <TextButton icon="tips" label="Советы" className="w-[62px]" />
        <Arrow className="w-[7px] mt-3 mr-[9px]" />
        <Grip className="mr-[6px]" />
        <TextButton icon="compass" label="Путеводитель по демонстрационной базе" className="w-[238px]" />
        <Arrow className="w-[7px] mt-3 mr-auto" />
        <Grip className="mr-px" />
        <IconStrip
            items={[
                ["sumReport", "Оборотно-сальдовая ведомость"], ["osv", "ОСВ по счету"], ["analysis", "Анализ счета"],
                ["analysisRows", "Анализ субконто"], ["card", "Карточка счета"], ["turnover", "Обороты счета"],
            ]}
        />
        <Arrow className="w-[7px] ml-[3px] mt-3 mr-[112px]" />
    </div>
);

const SectionTitle = ({ children }) => (
    <h3 className="h-[18px] pl-1 border-t border-[#b0a67a] bg-[#f5f2dd] text-[12px] leading-[17px] font-bold text-[#b5aa80]">
        {children}
    </h3>
);

const Link = ({ children, className = "" }) => (
    <a href="#" className={`text-[#3366ff] underline underline-offset-2 ${className}`}>
        {children}
    </a>
);

const SchemeRow = ({ captions }) => (
    <div>
        <div className="flex items-center pl-[29px]">
            {captions.map((_, i) => (
                <React.Fragment key={i}>
                    {i > 0 && <span className="w-[38px] h-[6px] mx-[13px] bg-[#f5f2dd]" />}
                    <svg viewBox="0 0 22 29" className="w-[22px] h-[29px]" aria-hidden="true">
                        <path d="M2 2 H15 L22 8 V29 H2 Z" fill="#dcd8cb" />
                        <path d="M0.5 0.5 H13.5 L20.5 7.5 V27.5 H0.5 Z" fill="#f6f7fc" stroke="#a9aebd" />
                        <path d="M1 1 H13.5 V7.5 H20 V11 H1 Z" fill="#dadfec" />
                        <path d="M13.5 0.5 V7.5 H20.5 Z" fill="#fff" stroke="#a9aebd" />
                        <path d="M8 4.5 H12 M7 6.5 H12" stroke="#5a5fc0" />
                        <path d="M3 9.5 H18" stroke="#8f94c8" strokeDasharray="2 1" />
                        <path d="M4.5 12.5 H16.5 V18.5 H4.5 Z M10.5 12.5 V18.5 M4.5 15.5 H16.5" stroke="#b0aede" fill="#fff" />
                        <path d="M3 21.5 H17 M3 23.5 H15 M14 25.5 H18" stroke="#a9acc8" strokeDasharray="2 1" />
                    </svg>
                </React.Fragment>
            ))}
        </div>
        <div className="flex gap-[6px] mt-[3px]">
            {captions.map((lines) => (
                <Link key={lines} className="w-20 whitespace-pre-line text-center">
                    {lines}
                </Link>
            ))}
        </div>
    </div>
);

const CashDesk = () => (
    <main className="flex-1 flex flex-col px-2 pt-2 pb-[7px] bg-[#fffbf0] border-t-2 border-l-2 border-t-[#4a4a48] border-l-[#4a4a48] border-r border-b border-r-[#d4d0c8] border-b-[#d4d0c8]">
        <div className="flex gap-[6px]" role="tablist">
            {TABS.map(([label, icon, width]) => {
                const active = label === "Касса";
                return (
                    <button
                        key={label}
                        type="button"
                        role="tab"
                        aria-selected={active}
                        className={`${width} shrink-0 flex items-center justify-center gap-px whitespace-nowrap border border-b-0 rounded-t-md ${
                            active
                                ? "relative z-10 -mb-px h-[21px] pb-[2px] bg-[#fffbf0] border-[#b0a67a] border-t-2 border-t-[#f7d88f]"
                                : "h-5 bg-[#ebe6cf] border-[#c9c19c]"
                        }`}
                    >
                        <Icon name={icon} />
                        {label}
                    </button>
                );
            })}
        </div>

        <div className="flex-1 flex flex-col border border-[#b0a67a] mr-1 px-[6px] pb-2">
            <div className="h-[41px] flex items-center pt-[2px]">
                <Icon name="money" className="w-7 h-7 ml-[3px]" />
                <h2 className="ml-[6px] text-[20px] leading-6 text-[#b5aa80]">Касса</h2>
                <div className="ml-auto mr-[3px] mb-[2px] flex items-center">
                    <TextButton icon="tips" label="Советы" className="w-[58px]" />
                    <Sep className="mx-[5px]" />
                    <TextButton icon="tools" label="Настройка..." className="w-[84px]" />
                </div>
            </div>

            <div className="flex gap-4 h-[315px]">
                <section className="flex-1">
                    <SectionTitle>Схема работы</SectionTitle>
                    <div className="flex flex-col gap-[25px] pt-5">
                        <SchemeRow
                            captions={["Приходный\nкассовый\nордер", "Расходный\nкассовый\nордер", "Авансовый\nотчет"]}
                        />
                        <SchemeRow captions={["Поступление\nденежных\nдокументов", "Выдача\nденежных\nдокументов"]} />
                    </div>
                </section>
                <section className="w-[379px] h-[154px] bg-[#f8f1e4]">
                    <SectionTitle>Статьи на сайте ИТС</SectionTitle>
                    <form className="flex gap-[5px] px-[6px] pt-[6px]">
                        <input aria-label="Поиск статей" className="flex-1 h-[19px] px-1 bg-white border border-[#b0a67a] rounded-sm" />
                        <button type="button" className="w-[50px] h-[19px] border border-[#b0a67a] rounded-sm bg-gradient-to-b from-white to-[#efe9c9]">
                            Найти
                        </button>
                    </form>
                    <div className="flex flex-col items-start gap-[11px] w-[210px] pl-[10px] pt-[11px]">
                        <Link>Оформление расходного кассового ордера</Link>
                        <Link>Поступление выручки в кассу</Link>
                        <Link>Инвентаризация средств в кассе организации</Link>
                    </div>
                </section>
            </div>

            <div className="flex-1 flex gap-4 mr-1">
                <section className="w-[504px] bg-[#f8f1e4]">
                    <SectionTitle>Журналы</SectionTitle>
                    <ul className="pl-[7px] pt-[3px]">
                        <li className="h-6 flex items-center gap-px">
                            <Icon name="book" />
                            <Link>Кассовые документы</Link>
                        </li>
                        <li className="h-6 flex items-center gap-px">
                            <Icon name="invoice" />
                            <Link>Регистрация счетов-фактур на аванс</Link>
                        </li>
                    </ul>
                </section>
                <section className="flex-1 bg-[#f8f1e4]">
                    <SectionTitle />
                </section>
                <section className="w-[512px] bg-[#f8f1e4]">
                    <SectionTitle>Отчеты</SectionTitle>
                    <ul className="pl-[7px] pt-[3px]">
                        {REPORTS.map(([icon, label]) => (
                            <li key={label} className="h-6 flex items-center gap-px">
                                <Icon name={icon} />
                                <Link>{label}</Link>
                            </li>
                        ))}
                    </ul>
                </section>
            </div>
        </div>
    </main>
);

const BUTTON_TITLES = { dots: "Выбрать", lens: "Открыть", cross: "Очистить", picker: "Календарь", letterT: "Тип" };

// Text box with the small buttons 1C puts at its right edge
const Field = ({ id, label, value = "", buttons = [], className = "", labelWidth = "", muted }) => (
    <>
        <label htmlFor={id} className={`${labelWidth} shrink-0 whitespace-nowrap`}>
            {label}
        </label>
        <div
            className={`${className} h-5 flex border border-[#b0a67a] rounded overflow-hidden text-black ${
                muted ? "bg-[#fffbf0]" : "bg-white"
            }`}
        >
            <input id={id} defaultValue={value} className="flex-1 min-w-0 px-[2px] outline-none" />
            {buttons.map((name) => (
                <button
                    key={name}
                    type="button"
                    title={BUTTON_TITLES[name]}
                    className="w-[15px] flex items-center justify-center bg-gradient-to-b from-[#fbf9ec] to-[#ece5c3] border-l border-[#d8d0aa]"
                >
                    <Icon name={name} className="w-3 h-3" />
                </button>
            ))}
        </div>
    </>
);

const DialogToolbar = () => (
    <div className="h-[25px] flex items-center pl-[5px] bg-[#f5f2dd] border-b border-[#b0a67a]">
        <button type="button" className="w-[90px] shrink-0 text-left whitespace-nowrap">Цены и валюта...</button>
        <Sep className="ml-[2px] mr-[7px]" />
        <button type="button" className="w-[60px] shrink-0 flex items-center gap-[3px]">
            Действия <Arrow className="w-[5px]" />
        </button>
        <Sep className="ml-[3px] mr-[2px]" />
        <IconStrip
            items={[
                ["write", "Записать"], ["|"], ["refresh", "Обновить"], ["pageAdd", "Скопировать"], ["|"],
                ["post", "Провести"], ["unpost", "Отмена проведения"], ["|"],
            ]}
        />
        <button type="button" title="Перейти" className="w-[30px] shrink-0 flex items-center justify-center gap-px">
            <Icon name="goto" /> <Arrow className="w-[5px]" />
        </button>
        <IconStrip items={[["|"], ["dtkt", "Результат проведения"], ["journal", "Журнал"], ["|"]]} />
        <button type="button" title="Реквизиты" className="w-[23px] h-[22px] shrink-0 flex items-center justify-center bg-[#e9e2c6] border border-[#b0a67a]">
            <Icon name="filter" />
        </button>
        <IconStrip items={[["|"], ["rows", "Список"], ["|"], ["help", "Справка"]]} />
    </div>
);

const DIALOG_TABS = ["Авансы (1 поз.)", "Товары (0 поз.)", "Оплата (0 поз.)", "Прочее (0 поз.)"];

const COLUMNS = [
    ["№", "w-[27px]"],
    ["Документ аванса", "w-[224px]"],
    ["Сумма аванса", "w-[120px]"],
    ["Валюта", "w-[65px]"],
    ["Выдано", "w-[120px]"],
    ["Израсходовано", ""],
];

const AdvancesTable = () => (
    <div className="h-[221px] mx-[6px] bg-white border border-[#b0a67a]">
        <table className="w-full table-fixed border-collapse">
            <thead>
                <tr className="h-5 bg-gradient-to-b from-[#fbf9ee] to-[#eee7c8] border-b border-[#b0a67a]">
                    {COLUMNS.map(([label, width]) => (
                        <th key={label} className={`${width} pl-1 text-left font-normal text-[#5a4300] border-r last:border-r-0 border-[#c5bc92]`}>
                            {label}
                        </th>
                    ))}
                </tr>
            </thead>
            <tbody>
                <tr className="h-[19px] text-black border-b border-[#b3cae6]">
                    <td className="pr-1 text-right border-r border-[#b3cae6]">1</td>
                    <td className="relative p-0 border-r border-[#b3cae6]">
                        <div className="flex h-[18px] pl-px pr-px pt-px">
                            <input
                                aria-label="Документ аванса"
                                className="flex-1 min-w-0 bg-[#4f69c2] border-b border-dotted border-[#d02040] outline-none"
                            />
                            {["letterT", "cross", "lens"].map((name) => (
                                <button
                                    key={name}
                                    type="button"
                                    title={BUTTON_TITLES[name]}
                                    className="w-[15px] flex items-center justify-center bg-[#f1ecd0] border-l border-[#fffbf0]"
                                >
                                    <Icon name={name} className="w-3 h-3" />
                                </button>
                            ))}
                        </div>
                        <ul
                            role="listbox"
                            aria-label="Тип документа"
                            className="absolute top-[18px] left-0 w-[223px] bg-white border border-[#b0a67a] z-10"
                        >
                            {["Списание с расчетного счета", "Выдача денежных документов", "Расходный кассовый ордер"].map((label, i) => (
                                <li
                                    key={label}
                                    role="option"
                                    aria-selected={i === 2}
                                    className={`h-[19px] pl-1 leading-[19px] ${i === 2 ? "bg-[#6f99cf] text-white" : ""}`}
                                >
                                    {label}
                                </li>
                            ))}
                        </ul>
                    </td>
                    <td className="border-r border-[#b3cae6]" />
                    <td className="border-r border-[#b3cae6]" />
                    <td className="border-r border-[#b3cae6]" />
                    <td />
                </tr>
            </tbody>
        </table>
    </div>
);

const AdvanceReportDialog = () => (
    <div
        role="dialog"
        aria-label="Авансовый отчет"
        className="absolute left-[260px] top-[181px] w-[717px] z-20 bg-[#cccccc] border border-t-white border-l-white border-r-[#8a8a8a] border-b-[#8a8a8a] px-[2px] pb-[2px]"
    >
        <div className="h-[21px] flex items-center pt-px px-[2px] text-[#2e2e2e]">
            <Icon name="doc" className="w-[14px] h-[14px]" />
            <h2 className="ml-[6px] text-[12px] leading-[14px] font-bold">Авансовый отчет: Авансовый отчет. Новый *</h2>
            <div className="ml-auto flex">
                {[
                    ["Свернуть", "M3 12 H10"],
                    ["Развернуть", "M2.5 2.5 H12 V12 H2.5 Z M2.5 3 H12"],
                    ["Закрыть", "M3 3 L12 12 M12 3 L3 12"],
                ].map(([title, d]) => (
                    <button key={title} type="button" title={title} className="w-5 flex items-center justify-center">
                        <svg viewBox="0 0 14 14" className="w-[14px] h-[14px]">
                            <path d={d} stroke="#2e2e2e" strokeWidth="1.6" fill="none" />
                        </svg>
                    </button>
                ))}
            </div>
        </div>

        <div className="border border-[#6f6f6f] bg-[#fffbf0]">
            <DialogToolbar />

            <div className="px-2">
                <div className="flex flex-col gap-1 pt-2">
                    <div className="flex items-center">
                        <Field id="number" label="Номер:" labelWidth="w-[86px]" className="w-[98px]" muted />
                        <Field id="date" label="от:" labelWidth="w-[20px] text-center" value="02.11.2013  0:00:00" buttons={["picker"]} className="w-[134px]" />
                        <Field id="store" label="Склад:" labelWidth="w-[107px] pl-[26px]" value="Основной склад" buttons={["dots", "lens"]} className="flex-1" />
                    </div>
                    <div className="flex items-center">
                        <Field id="org" label="Организация:" labelWidth="w-[86px]" value={'Торговый дом "Комплексный"'} buttons={["dots", "lens"]} className="w-[252px]" />
                        <Field id="person" label="Физ. лицо:" labelWidth="w-[107px] pl-[26px]" value="Арутюнова Евгения" buttons={["dots", "lens"]} className="flex-1" />
                    </div>
                </div>

                <div className="flex gap-[7px] mt-[7px]" role="tablist">
                    {DIALOG_TABS.map((label, i) => (
                        <button
                            key={label}
                            type="button"
                            role="tab"
                            aria-selected={i === 0}
                            className={`w-[97px] whitespace-nowrap border border-b-0 rounded-t-md ${
                                i === 0
                                    ? "relative z-10 h-5 -mb-px pb-px bg-[#fffbf0] border-[#b0a67a] border-t-2 border-t-[#f7d88f]"
                                    : "h-[19px] bg-[#ebe6cf] border-[#c9c19c]"
                            }`}
                        >
                            {label}
                        </button>
                    ))}
                </div>
                <div className="border border-[#b0a67a] pb-[5px]">
                    <div className="h-6 flex items-center pl-[6px]">
                        <IconStrip
                            items={[
                                ["add", "Добавить"], ["pageAdd", "Скопировать"], ["pencil", "Изменить"], ["remove", "Удалить"],
                                ["saveOk", "Закончить редактирование"], ["up", "Вверх"], ["down", "Вниз"],
                                ["sortAsc", "По возрастанию"], ["sortDesc", "По убыванию"],
                            ]}
                        />
                    </div>
                    <AdvancesTable />
                </div>

                <div className="flex mt-[7px]">
                    <div className="flex-1 flex flex-col gap-1">
                        <div className="flex items-center">
                            <Field id="purpose" label="Назначение:" labelWidth="w-[86px]" className="w-[280px]" />
                        </div>
                        <div className="flex items-center">
                            <Field id="docs" label="Приложение:" labelWidth="w-[86px]" className="w-10" />
                            <Field id="sheets" label="документов на" labelWidth="w-[86px] pl-[5px]" className="w-10" />
                            <span className="ml-[6px]">листах</span>
                        </div>
                    </div>
                    <dl className="w-[240px] grid grid-cols-[1fr_124px] gap-y-2 content-start pt-px pr-px text-right">
                        <dt>Авансов, руб.:</dt>
                        <dd className="text-[12px] font-bold text-black">0,00</dd>
                        <dt>По отчету, руб.:</dt>
                        <dd className="text-[12px] font-bold text-black">0,00</dd>
                    </dl>
                </div>
                <div className="flex items-center mt-1">
                    <Field id="manager" label="Ответственный:" labelWidth="w-[86px]" value="Иванова Ирина Владимировна" buttons={["dots", "cross", "lens"]} className="flex-1" />
                </div>
                <div className="flex items-center mt-1 mb-[7px]">
                    <Field id="comment" label="Комментарий:" labelWidth="w-[86px]" className="flex-1" />
                </div>
            </div>

            <div className="h-[25px] flex items-center justify-end pr-[6px] bg-[#f5f2dd] border-t border-[#b0a67a]">
                <button type="button">Авансовый отчет</button>
                <Sep className="ml-[6px] mr-[7px]" />
                <button type="button" className="flex items-center gap-[3px]">
                    Печать <Arrow className="w-[5px]" />
                </button>
                <Sep className="ml-[6px] mr-[7px]" />
                <button type="button">Записать</button>
                <Sep className="ml-[6px] mr-[7px]" />
                <button type="button" className="text-[12px] font-bold">OK</button>
                <Sep className="ml-[6px] mr-[7px]" />
                <button type="button">Закрыть</button>
            </div>
        </div>
    </div>
);

const WindowTabs = () => (
    <div className="h-6 flex items-start gap-px pt-[2px] pl-px">
        {[
            ["panel", "Панель функций"],
            ["doc", "Авансовые отчеты"],
            ["doc", "...: Авансовый отчет. Новый *"],
        ].map(([icon, label], i) => (
            <button
                key={label}
                type="button"
                className={`w-[172px] h-5 flex items-center gap-[2px] pl-[2px] whitespace-nowrap text-[#333] border border-[#b0a67a] ${
                    i === 2 ? "bg-[#b0cae6]" : "bg-[#b2b2b2]"
                }`}
            >
                <Icon name={icon} className="w-[14px] h-[14px]" />
                {label}
            </button>
        ))}
    </div>
);

const StatusBar = () => (
    <div className="h-5 flex items-center gap-[5px] leading-4">
        <div className="flex-1 border border-[#dedbc5] pl-1">Для получения подсказки нажмите F1</div>
        <div className="w-[29px] border border-[#dedbc5] text-center text-[#a89a5c]">CAP</div>
        <div className="w-[34px] border border-[#dedbc5] pl-[3px]">NUM</div>
    </div>
);

const Taskbar = () => (
    <footer className="h-[30px] flex items-center px-[2px] bg-[#d4d0c8] border-t-2 border-t-white text-black text-[11px] font-['DejaVu_Sans_Condensed','DejaVu_Sans',sans-serif]">
        <button type="button" className="w-[51px] h-[22px] flex items-center gap-[2px] px-px font-bold border-2 border-t-white border-l-white border-r-[#606060] border-b-[#606060]">
            <Icon name="flag" className="w-[15px] h-[15px]" />
            Пуск
        </button>
        <button type="button" className="ml-[5px] w-[160px] h-[22px] flex items-center gap-[3px] pl-[3px] font-bold whitespace-nowrap bg-[#ebe9e4] border-2 border-t-[#606060] border-l-[#606060] border-r-white border-b-white">
            <Icon name="logo" />
            1С:Предприятие - Де...
        </button>
        <button type="button" className="ml-[3px] w-[160px] h-[22px] flex items-center gap-[3px] pl-[2px] whitespace-nowrap border-2 border-t-white border-l-white border-r-[#606060] border-b-[#606060]">
            <Icon name="word" />
            Документ1 - Microsoft ...
        </button>
        <span className="ml-auto w-4 h-4 leading-4 text-center bg-[#0a246a] text-white">RU</span>
        <span className="mx-[5px] w-[2px] h-[22px] border-l border-l-[#808080] border-r border-r-white" />
        <div className="w-[115px] h-[23px] flex items-center gap-[2px] pl-px pr-[6px] border border-t-[#808080] border-l-[#808080] border-r-white border-b-white">
            <Icon name="muted" />
            <Icon name="usb" />
            <Icon name="speaker" />
            <Icon name="display" />
            <time className="ml-auto">14:56</time>
        </div>
    </footer>
);

const App = () => (
    <div className="relative min-h-screen flex flex-col bg-[#f5f2dd] text-[#3f2c00] text-[11px] leading-[13px] font-['Liberation_Sans',Arial,sans-serif]">
        <TitleBar />
        <MenuBar />
        <MainToolbar />
        <FunctionToolbar />
        <CashDesk />
        <WindowTabs />
        <StatusBar />
        <Taskbar />
        <AdvanceReportDialog />
    </div>
);

export default App;
